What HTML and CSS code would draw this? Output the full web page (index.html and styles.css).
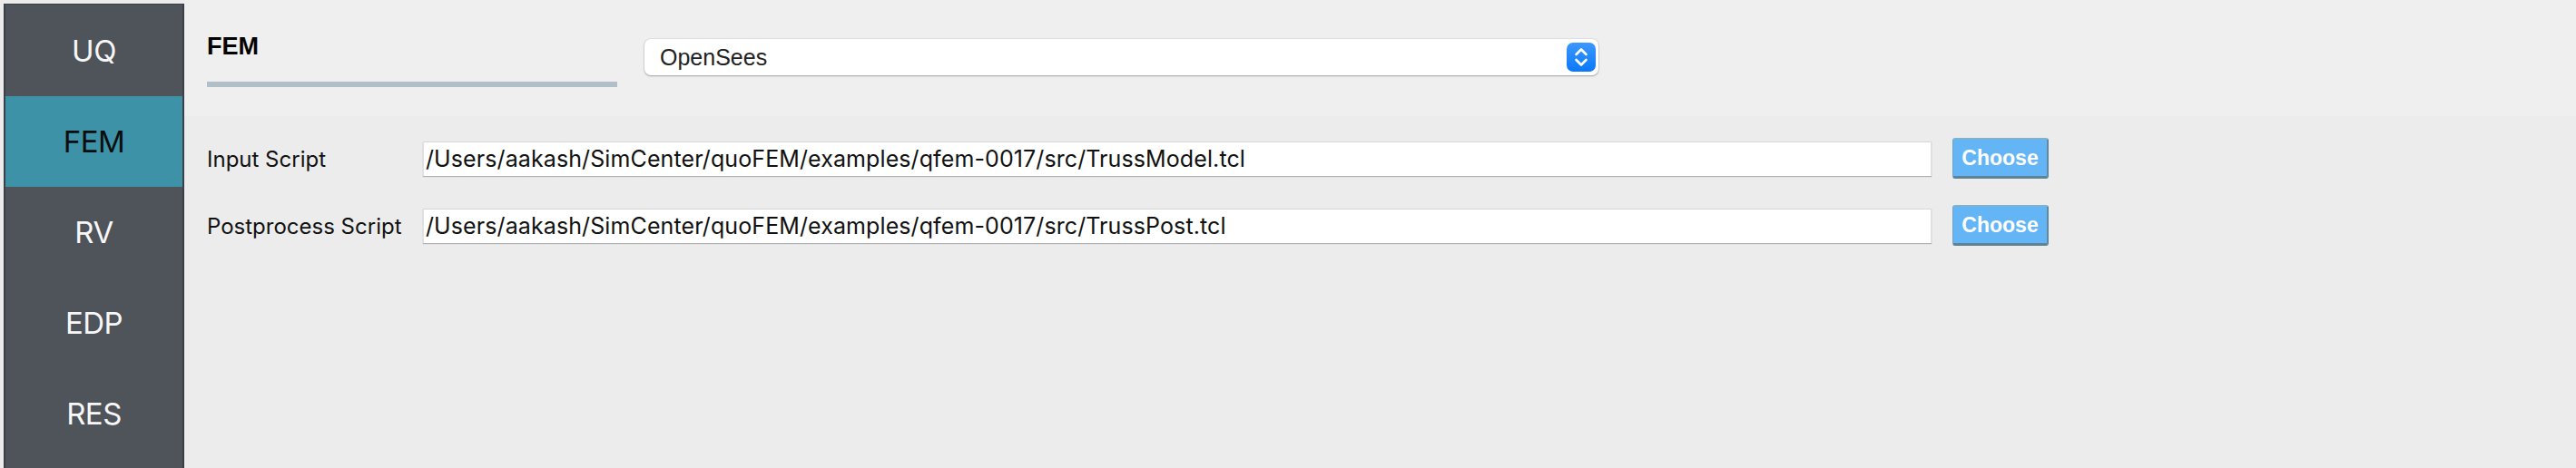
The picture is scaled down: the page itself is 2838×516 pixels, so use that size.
FILE: index.html
```html
<!DOCTYPE html>
<html lang="en">
<head>
<meta charset="utf-8">
<title>quoFEM - FEM</title>
<link rel="stylesheet" href="styles.css">
</head>
<body>
<div class="app">
  <nav class="sidebar">
    <div class="nav-item">UQ</div>
    <div class="nav-item active">FEM</div>
    <div class="nav-item">RV</div>
    <div class="nav-item">EDP</div>
    <div class="nav-item">RES</div>
  </nav>
  <main class="main">
    <header class="header">
      <div class="title-block">
        <div class="title">FEM</div>
        <div class="title-bar"></div>
      </div>
      <div class="combo">
        <span class="combo-text">OpenSees</span>
        <span class="stepper">
          <svg width="32" height="32" viewBox="0 0 32 32">
            <defs>
              <linearGradient id="stepGrad" x1="0" y1="0" x2="0" y2="1">
                <stop offset="0" stop-color="#3d98ff"/>
                <stop offset="1" stop-color="#0a78fa"/>
              </linearGradient>
            </defs>
            <rect x="0" y="0" width="32" height="32" rx="7" fill="url(#stepGrad)"/>
            <path d="M10.5 13 L16 7.5 L21.5 13" fill="none" stroke="#fff" stroke-width="2.6" stroke-linecap="round" stroke-linejoin="round"/>
            <path d="M10.5 19 L16 24.5 L21.5 19" fill="none" stroke="#fff" stroke-width="2.6" stroke-linecap="round" stroke-linejoin="round"/>
          </svg>
        </span>
      </div>
    </header>
    <section class="form">
      <div class="row">
        <label class="label">Input Script</label>
        <div class="field">/Users/aakash/SimCenter/quoFEM/examples/qfem-0017/src/TrussModel.tcl</div>
        <button class="btn">Choose</button>
      </div>
      <div class="row">
        <label class="label">Postprocess Script</label>
        <div class="field">/Users/aakash/SimCenter/quoFEM/examples/qfem-0017/src/TrussPost.tcl</div>
        <button class="btn">Choose</button>
      </div>
    </section>
  </main>
</div>
</body>
</html>
```

FILE: styles.css
```css
html, body {
  margin: 0;
  padding: 0;
  background: #ececec;
  height: 100%;
  overflow: hidden;
}

.app {
  display: flex;
  height: 516px;
  background: #ececec;
}

.sidebar {
  margin: 4px 0 0 4px;
  width: 195px;
  flex: none;
  background: #4f535a;
  border-left: 2px solid #3c3f45;
  border-right: 2px solid #3c3f45;
  border-top: 1px solid #3c3f45;
  display: flex;
  flex-direction: column;
}

.nav-item {
  height: 100px;
  display: flex;
  align-items: center;
  justify-content: center;
  font-family: Inter, "Liberation Sans", sans-serif;
  font-size: 33px;
  color: #f7f7f7;
  letter-spacing: -0.5px;
}

.nav-item:first-child {
  height: 101px;
}

.nav-item.active {
  background: #3e92a7;
  color: #0d0d0d;
}

.main {
  flex: 1;
  display: flex;
  flex-direction: column;
}

.header {
  height: 128px;
  background: #efefef;
  display: flex;
  align-items: flex-start;
  padding-left: 25px;
}

.title-block {
  width: 452px;
  padding-top: 38px;
}

.title {
  font-family: "Liberation Sans", Arial, sans-serif;
  font-weight: bold;
  font-size: 27px;
  line-height: 27px;
  height: 27px;
  color: #000;
}

.title-bar {
  margin-top: 25px;
  height: 6px;
  background: #b1bfc6;
}

.combo {
  margin-top: 43px;
  margin-left: 30px;
  width: 1051px;
  height: 40px;
  box-sizing: border-box;
  background: #fff;
  border-radius: 7px;
  box-shadow: 0 0 0 1px rgba(0,0,0,0.06), 0 1px 2px rgba(0,0,0,0.28);
  display: flex;
  align-items: center;
  padding: 0 3px 0 17px;
}

.combo-text {
  flex: 1;
  font-family: "Liberation Sans", Arial, sans-serif;
  font-size: 25px;
  color: #222;
  padding-top: 1px;
}

.stepper {
  display: flex;
  width: 32px;
  height: 32px;
}

.form {
  display: flex;
  flex-direction: column;
  gap: 29px;
  padding: 24px 0 0 25px;
}

.row {
  display: flex;
  align-items: center;
  height: 45px;
}

.label {
  width: 238px;
  flex: none;
  font-family: Inter, "Liberation Sans", sans-serif;
  font-size: 24px;
  color: #111;
  padding-top: 2px;
}

.field {
  width: 1662px;
  height: 38px;
  box-sizing: border-box;
  background: #fff;
  border-top: 1px solid #d6d6d6;
  border-left: 1px solid #e0e0e0;
  border-right: 1px solid #e0e0e0;
  box-shadow: 0 1px 1px rgba(0,0,0,0.25);
  font-family: Inter, "Liberation Sans", sans-serif;
  font-size: 25px;
  letter-spacing: 0.1px;
  line-height: 37px;
  color: #111;
  padding-left: 2px;
  white-space: nowrap;
  overflow: hidden;
}

.btn {
  margin-left: 23px;
  width: 106px;
  height: 45px;
  box-sizing: border-box;
  background: #64b5f6;
  border: none;
  border-top: 2px solid #7fb2cf;
  border-bottom: 3px solid #5e8296;
  border-left: 1px solid #6aa6cc;
  border-right: 2px solid #5e8aa3;
  border-radius: 3px;
  color: #fff;
  font-family: "Liberation Sans", Arial, sans-serif;
  font-weight: bold;
  font-size: 23px;
  padding: 0;
  cursor: pointer;
}
```
